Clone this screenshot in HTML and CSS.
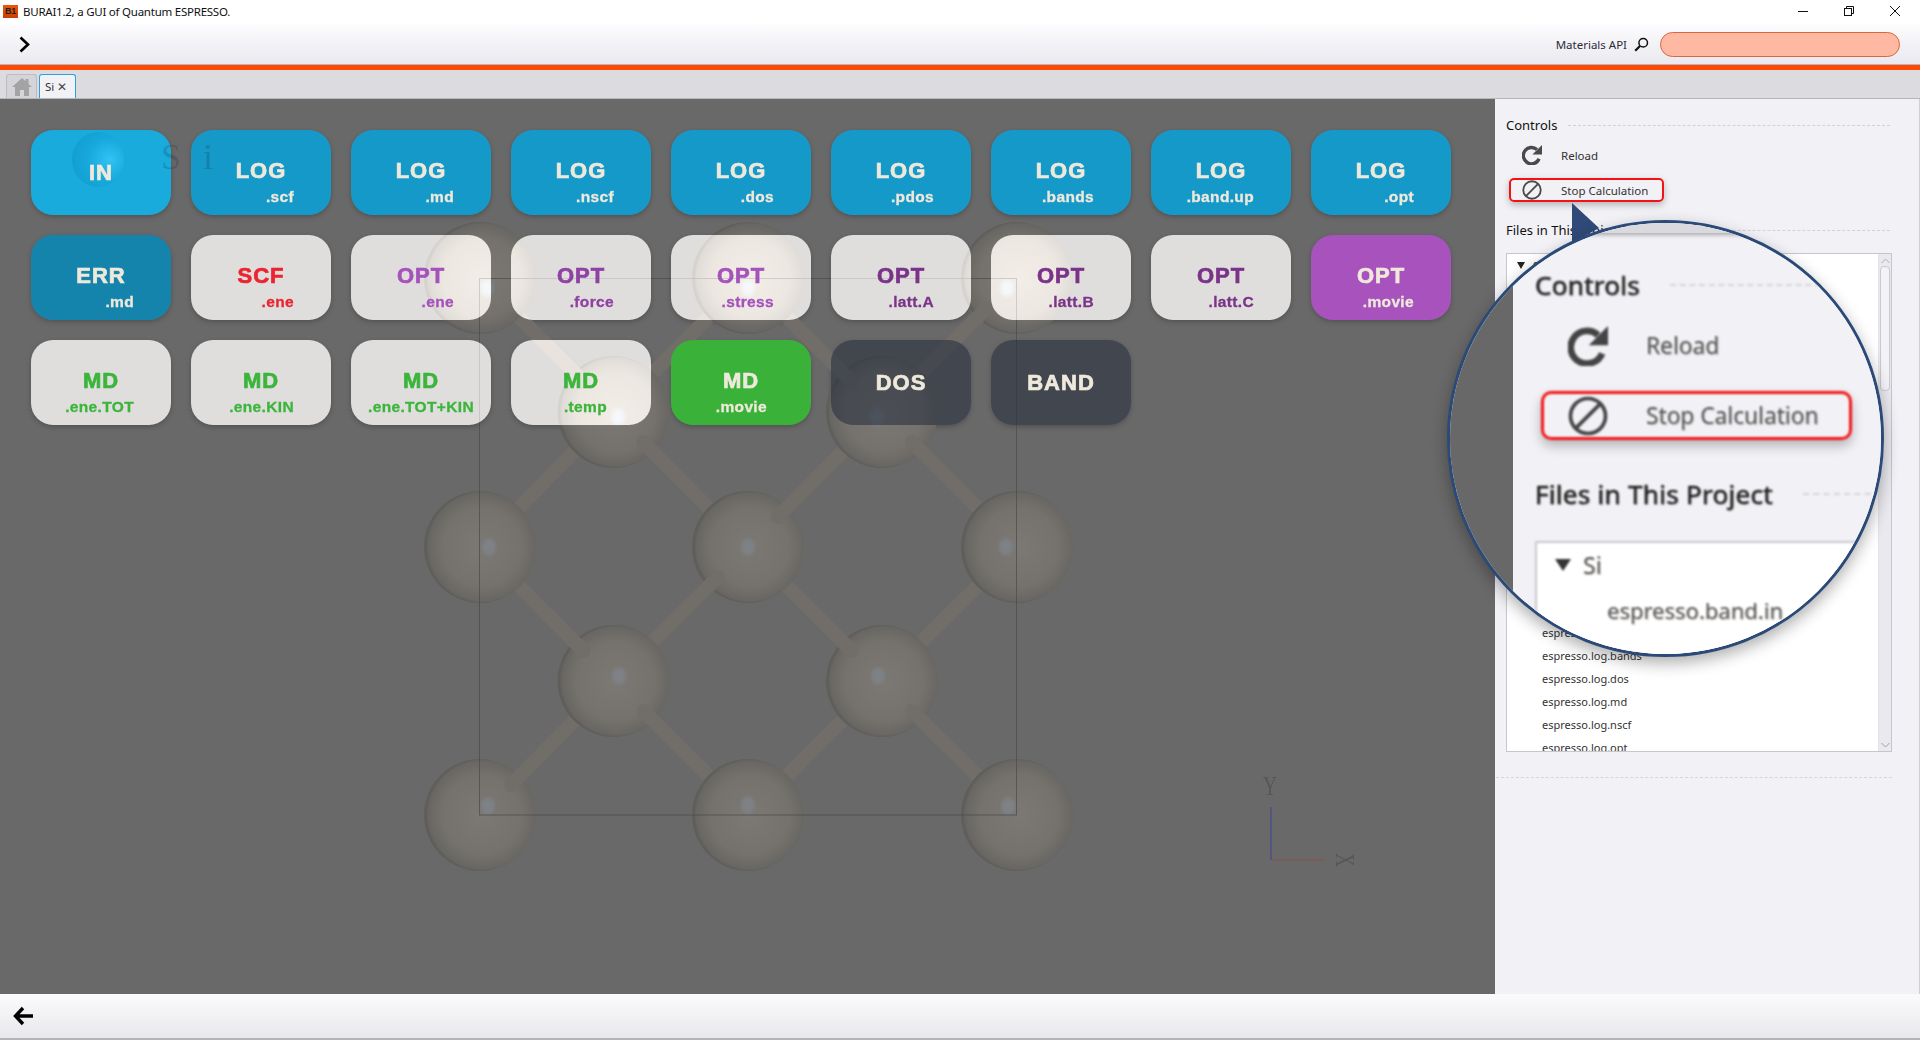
FILE: index.html
```html
<!DOCTYPE html>
<html lang="en">
<head>
  <meta charset="UTF-8" />
  <title>BURAI1.2, a GUI of Quantum ESPRESSO.</title>
  <link rel="stylesheet" href="styles.css">
</head>
<body>
  <svg class="defs" width="0" height="0">
    <symbol id="icon-reload" viewBox="0 0 24 24">
      <path d="M20.500 16.500A9.800 9.800 0 1 1 18 5.500" fill="none" stroke="currentColor" stroke-width="4"/>
      <polygon points="24,0 24,11.500 12.500,11.500" fill="currentColor"/>
    </symbol>
    <symbol id="icon-stop" viewBox="0 0 24 24">
      <circle cx="12" cy="12" r="10.500" fill="none" stroke="currentColor" stroke-width="2.200"/>
      <line x1="5" y1="19" x2="19" y2="5" stroke="currentColor" stroke-width="2.200"/>
    </symbol>
  </svg>

  <header class="titlebar">
    <span class="app-icon">B1</span>
    <span class="app-title">BURAI1.2, a GUI of Quantum ESPRESSO.</span>
    <div class="window-controls">
      <svg width="12" height="12" viewBox="0 0 12 12"><line x1="1" y1="6.500" x2="11" y2="6.500" stroke="#111"/></svg>
      <svg width="12" height="12" viewBox="0 0 12 12" fill="none" stroke="#111"><rect x="1.500" y="3.500" width="7" height="7"/><path d="M3.500 3.500v-2h7v7h-2"/></svg>
      <svg width="12" height="12" viewBox="0 0 12 12" stroke="#111"><line x1="1" y1="1" x2="11" y2="11"/><line x1="11" y1="1" x2="1" y2="11"/></svg>
    </div>
  </header>

  <div class="toolbar">
    <svg class="chevron" width="11" height="17" viewBox="0 0 11 17"><path d="M1.500 1.500l7.500 7-7.500 7" fill="none" stroke="#000" stroke-width="2.600"/></svg>
    <span class="api-label">Materials API</span>
    <svg class="search-icon" width="15" height="15" viewBox="0 0 15 15" fill="none" stroke="#111"><circle cx="9.200" cy="5.800" r="4.300" stroke-width="1.500"/><line x1="6" y1="9" x2="1.200" y2="13.800" stroke-width="2.200"/></svg>
    <div class="api-field"></div>
  </div>
  <div class="accent"></div>

  <nav class="tabs">
    <div class="tab tab-home">
      <svg width="20" height="18" viewBox="0 0 20 18"><path d="M10 0L0 9h3v9h5v-6h4v6h5V9h3l-3.500-3V1h-3v2.300z" fill="#a3a3a3"/></svg>
    </div>
    <div class="tab tab-active">Si <span class="tab-close">✕</span></div>
  </nav>

  <div class="workspace">
    <main class="canvas">
      <svg class="molecule" viewBox="0 99 1495 895" width="1495" height="895">
        <defs>
          <radialGradient id="atom" cx="52%" cy="50%" r="50%">
            <stop offset="0" stop-color="#7c7874"/>
            <stop offset="0.7" stop-color="#75726d"/>
            <stop offset="0.96" stop-color="#696763"/>
            <stop offset="1" stop-color="#5f5e5b"/>
          </radialGradient>
          <radialGradient id="glint">
            <stop offset="0" stop-color="#7f8386"/>
            <stop offset="0.5" stop-color="#7d8185"/>
            <stop offset="1" stop-color="#7d8185" stop-opacity="0"/>
          </radialGradient>
        </defs>

        <g class="bonds">
          <line x1="882" y1="681" x2="1017" y2="547"/>
          <line x1="748" y1="815" x2="882" y2="681"/>
          <line x1="480" y1="547" x2="613.500" y2="412"/>
          <line x1="613.500" y1="412" x2="748" y2="278"/>
        </g>
        <g class="atoms">
          <circle cx="882" cy="681" r="56"/>
          <circle cx="613.500" cy="412" r="56"/>
          <circle cx="480" cy="815" r="56"/>
          <circle cx="1017" cy="278" r="56"/>
        </g>
        <g class="bonds">
          <line x1="852" y1="651" x2="748" y2="547"/>
          <line x1="912" y1="711" x2="1017" y2="815"/>
          <line x1="643" y1="442" x2="748" y2="547"/>
          <line x1="584" y1="382" x2="480" y2="278"/>
          <line x1="511" y1="785" x2="613.500" y2="681"/>
          <line x1="987" y1="308" x2="882" y2="412"/>
        </g>
        <g class="atoms">
          <circle cx="748" cy="547" r="56"/>
        </g>
        <g class="bonds">
          <line x1="718" y1="577" x2="613.500" y2="681"/>
          <line x1="778" y1="517" x2="882" y2="412"/>
        </g>
        <g class="atoms">
          <circle cx="613.500" cy="681" r="56"/>
        </g>
        <g class="bonds">
          <line x1="583.500" y1="651" x2="480" y2="547"/>
          <line x1="643.500" y1="711" x2="748" y2="815"/>
        </g>
        <g class="atoms">
          <circle cx="882" cy="412" r="56"/>
        </g>
        <g class="bonds">
          <line x1="912" y1="442" x2="1017" y2="547"/>
          <line x1="852" y1="382" x2="748" y2="278"/>
        </g>
        <g class="atoms">
          <circle cx="480" cy="547" r="56"/>
          <circle cx="748" cy="815" r="56"/>
          <circle cx="1017" cy="547" r="56"/>
          <circle cx="1017" cy="815" r="56"/>
          <circle cx="480" cy="278" r="56"/>
          <circle cx="748" cy="278" r="56"/>
        </g>
        <g fill="url(#glint)">
          <ellipse cx="487" cy="288" rx="9" ry="11"/>
          <ellipse cx="748" cy="288" rx="9" ry="11"/>
          <ellipse cx="1007" cy="288" rx="9" ry="11"/>
          <ellipse cx="618" cy="417" rx="9" ry="11"/>
          <ellipse cx="877" cy="417" rx="9" ry="11"/>
          <ellipse cx="489" cy="547" rx="9" ry="11"/>
          <ellipse cx="748" cy="547" rx="9" ry="11"/>
          <ellipse cx="1006" cy="547" rx="9" ry="11"/>
          <ellipse cx="619" cy="676" rx="9" ry="11"/>
          <ellipse cx="878" cy="676" rx="9" ry="11"/>
          <ellipse cx="488" cy="806" rx="9" ry="11"/>
          <ellipse cx="748" cy="805" rx="9" ry="11"/>
          <ellipse cx="1008" cy="806" rx="9" ry="11"/>
        </g>
        <rect class="cell" x="479.500" y="278.500" width="537" height="536.500"/>

        <line class="axis-y" x1="1271" y1="807" x2="1271" y2="860"/>
        <line class="axis-x" x1="1272" y1="860" x2="1325" y2="860"/>
        <text class="axis-label" transform="translate(1270 795) scale(0.72 1)" text-anchor="middle">Y</text>
        <text class="axis-label" transform="translate(1336 860) rotate(90) scale(0.72 1)" text-anchor="middle">X</text>
      </svg>

      <div class="legend">
        <span class="legend-atom"></span>
        <span class="legend-s">S</span>
        <span class="legend-i">i</span>
      </div>

      <div class="button-grid">
        <div class="calc in-active"><span class="calc-main">IN</span></div>
        <div class="calc log"><span class="calc-main">LOG</span><span class="calc-sub">.scf</span></div>
        <div class="calc log"><span class="calc-main">LOG</span><span class="calc-sub">.md</span></div>
        <div class="calc log"><span class="calc-main">LOG</span><span class="calc-sub">.nscf</span></div>
        <div class="calc log"><span class="calc-main">LOG</span><span class="calc-sub">.dos</span></div>
        <div class="calc log"><span class="calc-main">LOG</span><span class="calc-sub">.pdos</span></div>
        <div class="calc log"><span class="calc-main">LOG</span><span class="calc-sub">.bands</span></div>
        <div class="calc log"><span class="calc-main">LOG</span><span class="calc-sub">.band.up</span></div>
        <div class="calc log"><span class="calc-main">LOG</span><span class="calc-sub">.opt</span></div>

        <div class="calc err"><span class="calc-main">ERR</span><span class="calc-sub">.md</span></div>
        <div class="calc light scf"><span class="calc-main">SCF</span><span class="calc-sub">.ene</span></div>
        <div class="calc light opt-a"><span class="calc-main">OPT</span><span class="calc-sub">.ene</span></div>
        <div class="calc light opt-b"><span class="calc-main">OPT</span><span class="calc-sub">.force</span></div>
        <div class="calc light opt-a"><span class="calc-main">OPT</span><span class="calc-sub">.stress</span></div>
        <div class="calc light opt-c"><span class="calc-main">OPT</span><span class="calc-sub">.latt.A</span></div>
        <div class="calc light opt-c"><span class="calc-main">OPT</span><span class="calc-sub">.latt.B</span></div>
        <div class="calc light opt-c"><span class="calc-main">OPT</span><span class="calc-sub">.latt.C</span></div>
        <div class="calc opt-movie"><span class="calc-main">OPT</span><span class="calc-sub">.movie</span></div>

        <div class="calc light md"><span class="calc-main">MD</span><span class="calc-sub">.ene.TOT</span></div>
        <div class="calc light md"><span class="calc-main">MD</span><span class="calc-sub">.ene.KIN</span></div>
        <div class="calc light md"><span class="calc-main">MD</span><span class="calc-sub sub-wide">.ene.TOT+KIN</span></div>
        <div class="calc light md"><span class="calc-main">MD</span><span class="calc-sub sub-inset">.temp</span></div>
        <div class="calc md-movie"><span class="calc-main">MD</span><span class="calc-sub sub-inset">.movie</span></div>
        <div class="calc dark"><span class="calc-main">DOS</span></div>
        <div class="calc dark"><span class="calc-main">BAND</span></div>
      </div>
    </main>

    <aside class="side">
      <div class="section-head"><span>Controls</span><i class="dash"></i></div>
      <div class="ctrl"><svg class="ctrl-icon"><use href="#icon-reload"/></svg>Reload</div>
      <div class="ctrl ctrl-marked"><svg class="ctrl-icon"><use href="#icon-stop"/></svg>Stop Calculation</div>

      <div class="section-head files-head"><span>Files in This Project</span><i class="dash"></i></div>
      <div class="tree">
        <div class="tree-rows">
          <div class="tree-row tree-root"><i class="caret"></i>Si</div>
          <div class="tree-row tree-file tree-skip">espresso.log</div>
          <div class="tree-row tree-file">espresso.log.bands</div>
          <div class="tree-row tree-file">espresso.log.dos</div>
          <div class="tree-row tree-file">espresso.log.md</div>
          <div class="tree-row tree-file">espresso.log.nscf</div>
          <div class="tree-row tree-file">espresso.log.opt</div>
        </div>
        <div class="tree-scroll">
          <svg width="11" height="8" viewBox="0 0 11 8"><path d="M1.500 6l4-4 4 4" fill="none" stroke="#b0b0b6"/></svg>
          <div class="thumb"></div>
          <svg class="scroll-down" width="11" height="8" viewBox="0 0 11 8"><path d="M1.500 2l4 4 4-4" fill="none" stroke="#a0a0a6"/></svg>
        </div>
      </div>
      <div class="side-rule"></div>

      <svg class="pointer" width="30" height="42" viewBox="0 0 30 42"><polygon points="0,0 0,40 27,25" fill="#2f4a78"/></svg>

      <div class="magnifier">
        <div class="mag-gap"></div>
        <div class="mag-panel">
          <div class="mag-band"></div>
          <div class="mag-content">
            <div class="mag-head mag-head-first"><span>Controls</span><i class="dash"></i></div>
            <div class="mag-ctrl"><svg class="mag-icon"><use href="#icon-reload"/></svg>Reload</div>
            <div class="mag-ctrl mag-marked"><svg class="mag-icon"><use href="#icon-stop"/></svg>Stop Calculation</div>
            <div class="mag-head mag-head-files"><span>Files in This Project</span><i class="dash"></i></div>
            <div class="mag-tree">
              <div class="mag-root"><i class="mag-caret"></i>Si</div>
              <div class="mag-file">espresso.band.in</div>
            </div>
          </div>
        </div>
      </div>
    </aside>
  </div>

  <footer class="statusbar">
    <svg width="22" height="22" viewBox="0 0 22 22"><path d="M10 3l-7.500 8 7.500 8M3 11h17" fill="none" stroke="#000" stroke-width="3.400"/></svg>
  </footer>
</body>
</html>
```

FILE: styles.css
```css
* {
  box-sizing: border-box;
}

body {
  margin: 0;
  width: 1920px;
  height: 1040px;
  display: flex;
  flex-direction: column;
  overflow: hidden;
  font-family: 'Noto Sans', sans-serif;
  background-color: #f1f1f6;
  color: #222;
}

.defs {
  position: absolute;
}

/* window chrome */
.titlebar {
  height: 24px;
  flex: none;
  display: flex;
  align-items: center;
  padding: 0 0 2px 3px;
  background-color: #fff;
  color: #111;
  font-size: 11.5px;
  letter-spacing: -0.24px;
}

.app-icon {
  width: 15px;
  height: 13px;
  margin-right: 5px;
  background: linear-gradient(#e8590f, #c93d08);
  color: #2d1c10;
  font: bold 9px/13px 'Liberation Sans', sans-serif;
  text-align: center;
}

.window-controls {
  margin-left: auto;
  display: flex;
  gap: 34px;
  padding-right: 19px;
}

.toolbar {
  height: 41px;
  flex: none;
  display: flex;
  align-items: center;
  padding: 0 20px 0 19px;
  background: linear-gradient(#fdfdfe, #e9e9ef);
  border-bottom: 1px solid #b4b4bc;
}

.chevron {
  margin-right: auto;
}

.api-label {
  font-size: 11.5px;
  color: #2b2b3a;
  margin-right: 7px;
}

.search-icon {
  margin-right: 11px;
}

.api-field {
  width: 240px;
  height: 25px;
  border-radius: 13px;
  background-color: #ffb9a3;
  border: 1px solid #d9683f;
}

.accent {
  height: 5px;
  flex: none;
  background-color: #ff4a05;
}

.tabs {
  height: 29px;
  flex: none;
  display: flex;
  align-items: flex-end;
  gap: 2px;
  padding-left: 6px;
  background-color: #dcdce0;
  border-bottom: 1px solid #b5b5ba;
}

.tab {
  height: 24px;
  display: flex;
  align-items: center;
  border: 1px solid #bcbcc2;
  border-bottom: none;
  border-radius: 3px 3px 0 0;
}

.tab-home {
  width: 31px;
  justify-content: center;
  background-color: #d4d4d9;
}

.tab-active {
  width: 37px;
  gap: 3px;
  padding-left: 5px;
  font-size: 11.5px;
  color: #333;
  background-color: #f1f1f6;
  border-color: #2ba3d8;
}

.tab-close {
  font-size: 12px;
  color: #444;
}

.workspace {
  flex: 1;
  display: flex;
  min-height: 0;
}

/* viewer */
.canvas {
  flex: 1;
  position: relative;
  isolation: isolate;
  background-color: #696969;
}

.molecule {
  position: absolute;
  left: 0;
  top: 0;
}

.bonds line {
  stroke: #716e6a;
  stroke-width: 14;
  stroke-linecap: round;
}

.atoms circle {
  fill: url(#atom);
}

.cell {
  fill: none;
  stroke: #4c4c4c;
  stroke-opacity: 0.75;
}

.axis-y {
  stroke: #54557f;
  stroke-width: 2;
}

.axis-x {
  stroke: #7d5a5c;
  stroke-width: 2;
}

.axis-label {
  font-family: 'Liberation Serif', serif;
  font-size: 27px;
  fill: #575757;
}

.legend-atom {
  position: absolute;
  left: 72px;
  top: 33px;
  width: 52px;
  height: 55px;
  border-radius: 50%;
  z-index: 1;
  background: radial-gradient(circle at 72% 50%, #32c3f4, #17a9dc 45%, #1198c9 100%);
}

.legend-s, .legend-i {
  position: absolute;
  top: 38px;
  z-index: 1;
  font-family: 'Liberation Serif', serif;
  font-size: 36px;
  line-height: 40px;
  color: rgba(20, 40, 60, 0.2);
}

.legend-s {
  left: 161px;
}

.legend-i {
  left: 203px;
}

.button-grid {
  display: grid;
  grid-template-columns: repeat(9, 140px);
  grid-auto-rows: 85px;
  gap: 20px;
  padding: 31px 0 0 31px;
}

.calc {
  display: flex;
  flex-direction: column;
  border-radius: 22px;
  box-shadow: 0 2px 5px rgba(0, 0, 0, 0.22);
  color: #efe9dc;
  font-family: 'Liberation Sans', sans-serif;
  font-weight: bold;
}

.calc::before {
  content: "";
  position: absolute;
  width: 140px;
  height: 85px;
  border-radius: 22px;
  background-color: var(--face);
}

.calc-main, .calc-sub {
  position: relative;
  z-index: 2;
}

.calc-main {
  height: 26px;
  margin-top: 28px;
  font-size: 22px;
  line-height: 26px;
  letter-spacing: 1px;
  -webkit-text-stroke: 0.7px currentColor;
  text-align: center;
}

.calc-sub {
  margin-top: 4px;
  padding-right: 37px;
  font-size: 15.5px;
  line-height: 18px;
  letter-spacing: 0.35px;
  -webkit-text-stroke: 0.3px currentColor;
  text-align: right;
}

.sub-wide {
  padding-right: 0;
  text-align: center;
  white-space: nowrap;
}

.sub-inset {
  padding-right: 44px;
}

.in-active { --face: rgba(21, 175, 226, 0.95); }
.log { --face: rgba(6, 162, 218, 0.85); }
.err { --face: rgba(6, 138, 186, 0.85); }
.opt-movie { --face: #a752bd; }
.md-movie { --face: #3ab23a; }
.dark { --face: rgba(35, 44, 58, 0.55); }

.light {
  --face: #777574;
}

.light::before {
  mix-blend-mode: plus-lighter;
}

.scf { color: #ea2430; }
.opt-a { color: #a552bb; }
.opt-b { color: #8f42a3; }
.opt-c { color: #7a3389; }
.md { color: #3bb53b; }

.in-active .calc-main {
  margin-top: 30px;
}

.dark .calc-main {
  margin-top: 30px;
}

/* side panel */
.side {
  width: 425px;
  flex: none;
  position: relative;
  padding: 17px 29px 0 11px;
  background-color: #f1f1f6;
  border-right: 1px solid #cfcfd5;
}

.section-head {
  height: 18px;
  display: flex;
  align-items: center;
  gap: 11px;
  font-size: 13px;
  color: #111;
}

.dash {
  flex: 1;
  border-top: 1px dashed #d2d2d6;
}

.files-head {
  margin-top: 19px;
}

.ctrl {
  width: 155px;
  height: 24px;
  margin: 9px 0 0 3px;
  display: flex;
  align-items: center;
  padding-left: 11px;
  border: 2px solid transparent;
  border-radius: 5px;
  font-size: 11.5px;
  color: #333;
}

.ctrl-icon {
  width: 20px;
  height: 20px;
  margin-right: 19px;
  color: #4a4a4a;
}

.ctrl-marked {
  margin-top: 11px;
  border-color: #f21414;
  box-shadow: 0 3px 7px rgba(0, 0, 0, 0.25);
}

.tree {
  height: 499px;
  margin-top: 14px;
  margin-right: -2px;
  display: flex;
  background-color: #fff;
  border: 1px solid #c6c6cc;
}

.tree-rows {
  flex: 1;
  overflow: hidden;
}

.tree-row {
  height: 23px;
  display: flex;
  align-items: center;
  font-size: 11px;
  color: #333;
}

.tree-root {
  padding-left: 10px;
}

.caret {
  width: 0;
  height: 0;
  margin-right: 8px;
  border-left: 4px solid transparent;
  border-right: 4px solid transparent;
  border-top: 7px solid #222;
}

.tree-file {
  padding-left: 35px;
}

.tree-skip {
  margin-top: 344px;
}

.tree-scroll {
  width: 13px;
  display: flex;
  flex-direction: column;
  align-items: center;
  padding-top: 3px;
  background-color: #e9e9ef;
  border-left: 1px solid #e2e2e8;
}

.thumb {
  width: 10px;
  height: 125px;
  margin-top: 1px;
  background-color: #f3f3f7;
  border: 1px solid #c9c9cf;
  border-radius: 4px;
}

.scroll-down {
  margin-top: auto;
  margin-bottom: 2px;
}

.side-rule {
  margin: 25px -2px 0 -10px;
  border-top: 1px dashed #d6d6da;
}

/* magnified callout over the panel */
.pointer {
  position: absolute;
  left: 77px;
  top: 104px;
}

.magnifier {
  position: absolute;
  left: -48px;
  top: 121px;
  width: 437px;
  height: 437px;
  display: flex;
  overflow: hidden;
  background-color: #f1f1f6;
  border: 3px solid #2b4a78;
  border-radius: 50%;
  box-shadow: 0 6px 16px rgba(0, 0, 0, 0.32);
  z-index: 3;
}

.mag-gap {
  width: 63px;
  flex: none;
  background-color: #686868;
}

.mag-panel {
  flex: 1;
  background-color: #f1f1f6;
}

.mag-band {
  height: 10px;
  background-color: #dadade;
  box-shadow: 0 2px 4px rgba(0, 0, 0, 0.3);
}

.mag-content {
  padding-left: 22px;
  color: #222;
  filter: blur(0.9px);
  text-shadow: 1px 1px 1px rgba(120, 100, 80, 0.35);
}

.mag-head {
  height: 36px;
  display: flex;
  align-items: center;
  gap: 30px;
  font-size: 26px;
  letter-spacing: 0.3px;
  -webkit-text-stroke: 0.5px currentColor;
  white-space: nowrap;
}

.mag-head-first {
  margin-top: 34px;
  padding-right: 60px;
}

.mag-head-files {
  margin-top: 36px;
}

.mag-head .dash {
  border-top: 2px dashed #d6d6da;
}

.mag-ctrl {
  width: 311px;
  height: 49px;
  margin: 18px 0 0 6px;
  display: flex;
  align-items: center;
  padding-left: 24px;
  border: 3px solid transparent;
  border-radius: 10px;
  font-size: 22.7px;
  color: #555;
  white-space: nowrap;
}

.mag-icon {
  width: 40px;
  height: 40px;
  margin-right: 38px;
  color: #444;
}

.mag-marked {
  margin-top: 21px;
  border-color: #f21414;
  box-shadow: 0 6px 12px rgba(0, 0, 0, 0.25);
}

.mag-tree {
  margin-top: 29px;
  height: 200px;
  padding: 6px 0 0 18px;
  background-color: #fff;
  border-top: 2px solid #c8c8ce;
  border-left: 2px solid #c8c8ce;
}

.mag-root {
  display: flex;
  align-items: center;
  font-size: 23px;
  color: #555;
}

.mag-caret {
  width: 0;
  height: 0;
  margin-right: 12px;
  border-left: 8px solid transparent;
  border-right: 8px solid transparent;
  border-top: 12px solid #333;
}

.mag-file {
  margin: 14px 0 0 52px;
  font-size: 22px;
  color: #555;
}

.statusbar {
  height: 46px;
  flex: none;
  display: flex;
  align-items: center;
  padding-left: 13px;
  background: linear-gradient(#fbfbfc, #e8e8ed);
  border-bottom: 2px solid #b4b4b8;
}
```
